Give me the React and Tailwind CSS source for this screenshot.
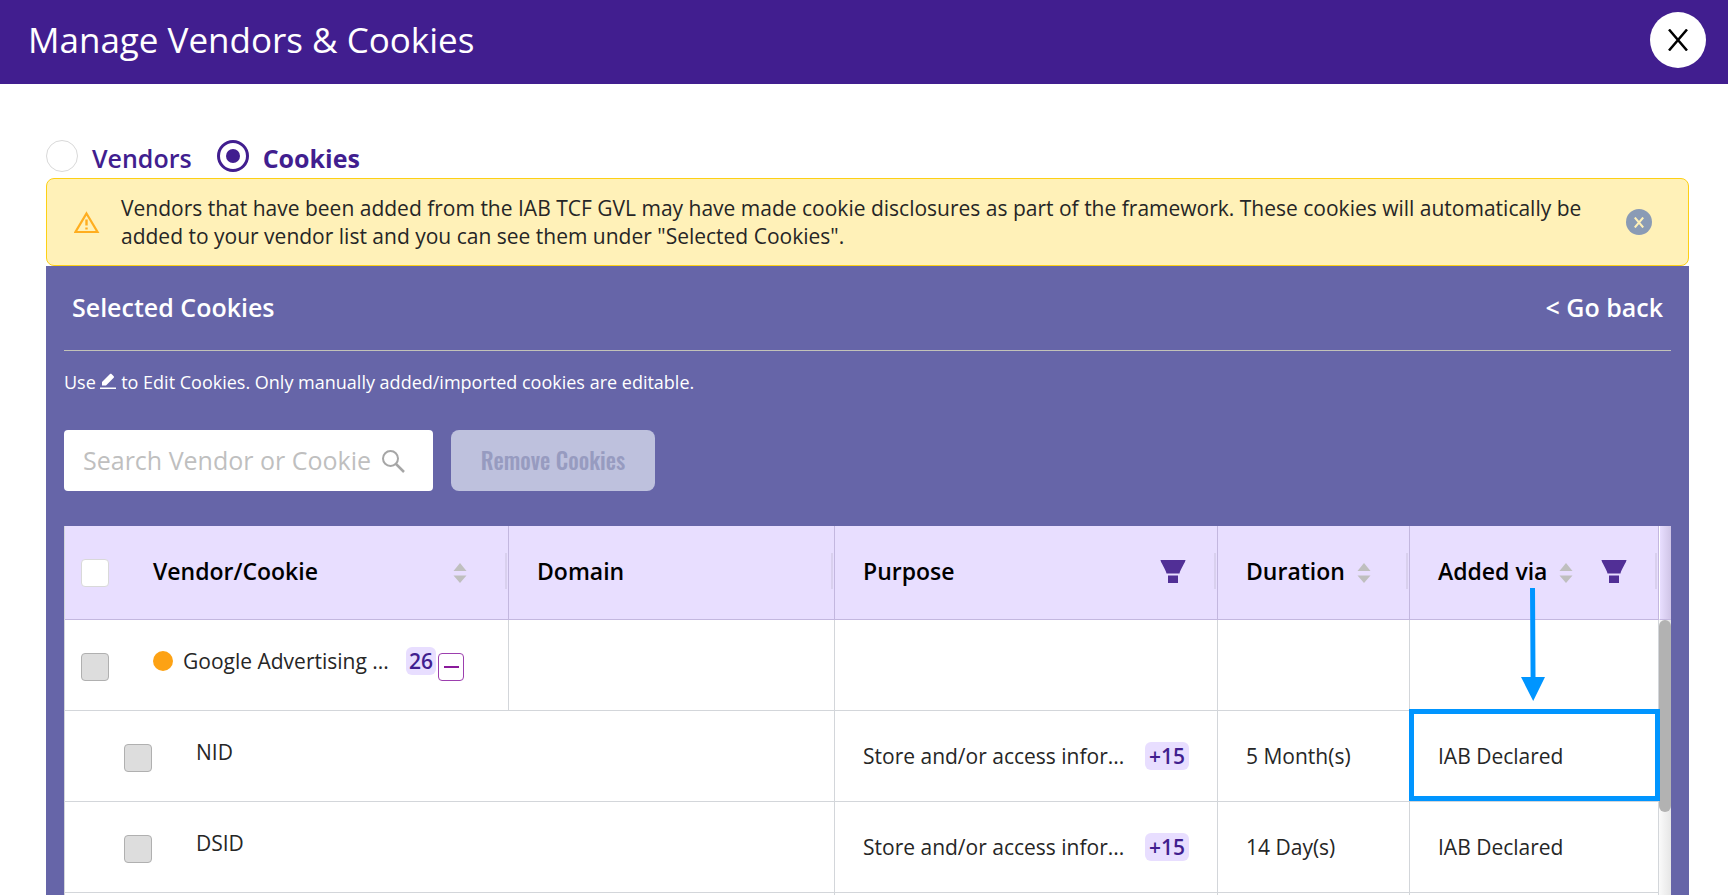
import { useState } from "react";

const rows = [
  { name: "NID", duration: "5 Month(s)", highlighted: true },
  { name: "DSID", duration: "14 Day(s)", highlighted: false },
];

function SortIcon() {
  return (
    <svg className="mt-1 h-5 w-3.5 shrink-0" viewBox="0 0 14 20" fill="#bfbfbf" aria-hidden="true">
      <path d="M7 0 13.5 8H.5ZM7 20 .5 12.5h13Z" />
    </svg>
  );
}

function FilterIcon() {
  return (
    <svg className="block h-6 w-[26px]" viewBox="0 0 26 24" fill="#512f96" aria-hidden="true">
      <path d="M.5 1h25c0 2-5.200 9.500-6 13.500h-13C5.700 10.500.5 3 .5 1Z" />
      <path d="M8 16.500h10V24H8z" />
    </svg>
  );
}

function WarningIcon() {
  return (
    <svg className="h-6 w-[26px] shrink-0" viewBox="0 0 26 24" fill="none" stroke="#ffae1f" strokeWidth="2.200" aria-hidden="true">
      <path d="M12.500 3.500 23.500 22H1.500Z" />
      <path d="M12.500 9.500v6M12.500 17.500v2" strokeWidth="2.400" />
    </svg>
  );
}

function PencilIcon() {
  return (
    <svg className="inline-block h-4 w-4 align-baseline" viewBox="0 0 16 16" fill="#fff" aria-hidden="true">
      <path d="M0 14.500h16V16H0zM2 12.500V9l8-8c.5-.5 1-.5 1.500 0l2.200 2.200c.5.5.5 1 0 1.500L6 12.500Z" />
    </svg>
  );
}

function HeaderCell({ children }) {
  return (
    <th scope="col" className="border-r border-b border-[#c3b7df] p-0 text-left font-semibold text-black">
      <div className="flex h-[93px] items-center pb-1">
        <div className="flex flex-1 items-center pr-7 pl-7">{children}</div>
        <span className="mr-px h-9 w-0.5 bg-[#d9d0ee]" />
      </div>
    </th>
  );
}

function Cell({ children, className = "" }) {
  return <td className={"h-[91px] border-r border-b border-[#d3d6da] px-7 py-0 " + className}>{children}</td>;
}

export default function App() {
  const [tab, setTab] = useState("cookies");
  const radio =
    "mb-1 grid size-8 appearance-none place-content-center rounded-full border border-[#d9d9d9] bg-white before:size-3.5 before:rounded-full checked:border-[3px] checked:border-[#411e8f] checked:before:bg-[#411e8f]";
  const box = "size-7 shrink-0 appearance-none rounded-sm border";
  return (
    <div className="flex h-screen flex-col overflow-hidden bg-white font-['Open_Sans','Noto_Sans',sans-serif] text-[#262626]">
      <header className="flex h-[84px] shrink-0 items-center justify-between bg-[#411e8f] pr-[22px] pb-1 pl-7">
        <h1 className="text-[35px] text-white">Manage Vendors &amp; Cookies</h1>
        <button type="button" aria-label="Close" className="grid size-14 place-content-center rounded-full bg-white">
          <svg className="h-[22px] w-5" viewBox="0 0 20 22" fill="none" stroke="#000" strokeWidth="2.500" aria-hidden="true">
            <path d="M1 .5 19 21.500M19 .5 1 21.500" />
          </svg>
        </button>
      </header>

      <main className="flex min-h-0 flex-1 flex-col pr-[39px] pl-[46px]">
        <div className="flex h-[94px] shrink-0 items-end gap-[25px] pb-0.5 text-[25px] leading-8 text-[#411e8f]">
          <label className="flex items-center gap-3.5 font-semibold">
            <input type="radio" name="view" className={radio} checked={tab === "vendors"} onChange={() => setTab("vendors")} />
            <span>Vendors</span>
          </label>
          <label className="flex items-center gap-3.5 font-bold">
            <input type="radio" name="view" className={radio} checked={tab === "cookies"} onChange={() => setTab("cookies")} />
            <span>Cookies</span>
          </label>
        </div>

        <div role="alert" className="flex min-h-[88px] shrink-0 items-center gap-[21px] rounded-lg border border-[#fdd015] bg-[#fff1b8] pr-9 pl-[27px]">
          <WarningIcon />
          <p className="flex-1 text-[21px] leading-7">
            Vendors that have been added from the IAB TCF GVL may have made cookie disclosures as part of the framework. These cookies will automatically be added to your vendor list and you can see them under "Selected Cookies".
          </p>
          <button type="button" aria-label="Dismiss" className="grid size-[26px] place-content-center rounded-full bg-[#8a9bb5]">
            <svg className="h-[11px] w-2.5" viewBox="0 0 10 11" fill="none" stroke="#fff1b8" strokeWidth="2" aria-hidden="true">
              <path d="M.8.5 9.200 10.500M9.200.5.8 10.500" />
            </svg>
          </button>
        </div>

        <section className="flex min-h-0 flex-1 flex-col bg-[#6665a8] px-[18px]">
          <div className="flex h-[85px] shrink-0 items-center justify-between border-b border-[#c2c2b8] px-2 text-[25px] font-semibold text-white">
            <h2>Selected Cookies</h2>
            <a href="#back">&lt; Go back</a>
          </div>
          <p className="mt-[17px] shrink-0 text-lg text-white">
            Use <PencilIcon /> to Edit Cookies. Only manually added/imported cookies are editable.
          </p>
          <div className="mt-[34px] flex shrink-0 gap-[18px]">
            <div className="flex h-[61px] w-[369px] items-center rounded-sm bg-white pr-7 pl-[19px]">
              <input type="text" aria-label="Search Vendor or Cookie" placeholder="Search Vendor or Cookie" className="min-w-0 flex-1 bg-transparent text-[25px] placeholder:text-[#bfbfbf]" />
              <svg className="h-6 w-6 shrink-0" viewBox="0 0 24 24" fill="none" stroke="#a6a6a6" strokeWidth="2" aria-hidden="true">
                <circle cx="9.500" cy="9.500" r="7.500" />
                <path d="m15 15 8 8" strokeWidth="2.500" />
              </svg>
            </div>
            <button type="button" disabled className="h-[61px] w-[204px] rounded-lg bg-[#bec1dd] font-['Oswald','Roboto_Condensed','Roboto',sans-serif] text-[23px] font-medium whitespace-nowrap text-[#979bc0]">
              Remove Cookies
            </button>
          </div>

          <div className="mt-[35px] flex items-stretch rounded-t-sm bg-white">
            <table className="w-full min-w-0 flex-1 table-fixed border-separate border-spacing-0 border-l border-[#d3d6da] text-[21px] leading-7">
              <colgroup>
                <col className="w-[444px]" />
                <col className="w-[326px]" />
                <col className="w-[383px]" />
                <col className="w-[192px]" />
                <col className="w-[249px]" />
              </colgroup>
              <thead className="bg-[#e8deff] text-[23px]">
                <tr>
                  <th scope="col" className="border-r border-b border-[#c3b7df] p-0 text-left font-semibold text-black">
                    <div className="flex h-[93px] items-center pb-1">
                      <div className="flex flex-1 items-center pr-[38px] pl-4">
                        <input type="checkbox" aria-label="Select all" className={box + " mt-1 mr-11 border-[#d9d9d9] bg-white"} />
                        <span className="flex-1">Vendor/Cookie</span>
                        <SortIcon />
                      </div>
                      <span className="mr-px h-9 w-0.5 bg-[#d9d0ee]" />
                    </div>
                  </th>
                  <HeaderCell>Domain</HeaderCell>
                  <HeaderCell>
                    <span className="flex-1">Purpose</span>
                    <button type="button" aria-label="Filter purpose"><FilterIcon /></button>
                  </HeaderCell>
                  <HeaderCell>
                    <span className="mr-3">Duration</span>
                    <SortIcon />
                  </HeaderCell>
                  <HeaderCell>
                    <span className="relative mr-3 whitespace-nowrap">
                      Added via
                      <svg className="absolute top-[31px] right-0.5 z-10 h-[113px] w-6" viewBox="0 0 24 113" aria-hidden="true">
                        <path d="M9 0h5l.5 89H24L12.200 113 0 89h9.600Z" fill="#0095ff" />
                      </svg>
                    </span>
                    <SortIcon />
                    <button type="button" aria-label="Filter added via" className="ml-auto"><FilterIcon /></button>
                  </HeaderCell>
                </tr>
              </thead>
              <tbody>
                <tr>
                  <td className="h-[91px] border-r border-b border-[#d3d6da] py-0 pr-0 pl-4">
                    <div className="flex items-start pb-0.5">
                      <input type="checkbox" disabled aria-label="Select Google Advertising" className={box + " mt-1.5 mr-11 border-[#b0b0b0] bg-[#dddddd]"} />
                      <span className="mt-1 mr-2.5 size-5 rounded-full bg-[#fda214]" />
                      <span className="w-[223px]">Google Advertising ...</span>
                      <span className="rounded-md bg-[#e8deff] px-[3px] font-semibold text-[#411e8f]">26</span>
                      <button type="button" aria-label="Collapse" className="mt-1.5 ml-0.5 grid h-7 w-[26px] place-content-center rounded-sm border border-[#9c3fae] bg-white">
                        <span className="h-0.5 w-[15px] bg-[#8a1a9b]" />
                      </button>
                    </div>
                  </td>
                  <Cell />
                  <Cell />
                  <Cell />
                  <Cell />
                </tr>
                {rows.map((row) => (
                  <tr key={row.name}>
                    <td colSpan={2} className="h-[91px] border-r border-b border-[#d3d6da] py-0 pr-0 pl-[59px]">
                      <div className="flex items-start pb-0.5">
                        <input type="checkbox" disabled id={row.name} className={box + " mt-1.5 mr-11 border-[#b0b0b0] bg-[#dddddd]"} />
                        <label htmlFor={row.name}>{row.name}</label>
                      </div>
                    </td>
                    <Cell>
                      <div className="flex items-center justify-between">
                        <span className="whitespace-nowrap">Store and/or access infor...</span>
                        <span className="rounded-md bg-[#e8deff] px-1 font-semibold text-[#411e8f]">+15</span>
                      </div>
                    </Cell>
                    <Cell>{row.duration}</Cell>
                    <Cell className="relative">
                      IAB Declared
                      {row.highlighted && <span className="absolute -top-0.5 -right-0.5 bottom-0 -left-px border-[5px] border-[#0095ff]" />}
                    </Cell>
                  </tr>
                ))}
                <tr>
                  <td colSpan={2} className="h-[91px] border-r border-[#d3d6da]" />
                  <Cell />
                  <Cell />
                  <Cell />
                </tr>
              </tbody>
            </table>
            <div className="flex w-[13px] flex-col bg-linear-to-r from-[#fafafa] to-[#e6e6e6]" aria-hidden="true">
              <div className="h-[94px] border-b border-l border-b-[#c3b7df] border-l-white bg-linear-to-r from-[#e8deff] to-[#cfc4e6]" />
              <div className="h-48 rounded-full bg-[#b2b2b2]" />
            </div>
          </div>
        </section>
      </main>
    </div>
  );
}
